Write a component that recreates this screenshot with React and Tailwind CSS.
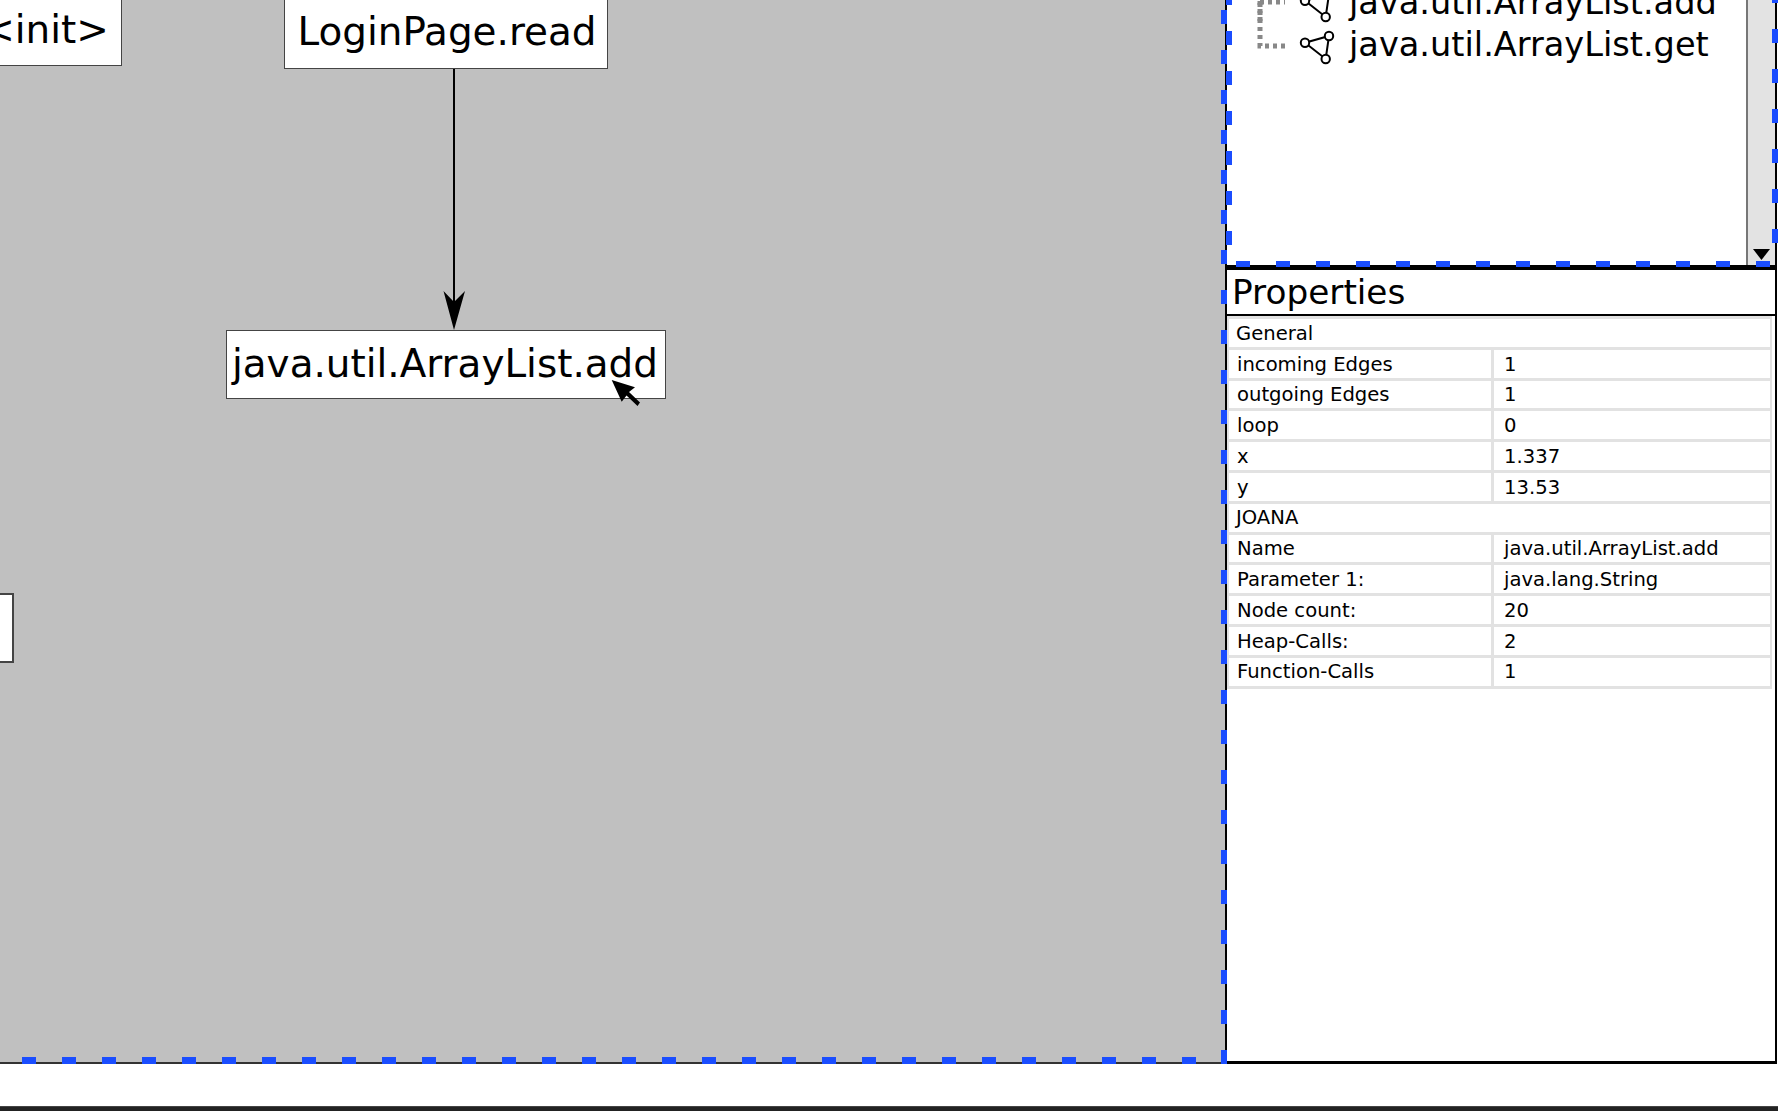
import React from 'react';

const rowsGeneral = [
  ['incoming Edges', '1'],
  ['outgoing Edges', '1'],
  ['loop', '0'],
  ['x', '1.337'],
  ['y', '13.53'],
];

const rowsJoana = [
  ['Name', 'java.util.ArrayList.add'],
  ['Parameter 1:', 'java.lang.String'],
  ['Node count:', '20'],
  ['Heap-Calls:', '2'],
  ['Function-Calls', '1'],
];

function TreeIcon({ last }) {
  return (
    <svg width="80" height="42" viewBox="0 0 80 42" className="shrink-0 overflow-visible">
      <path
        d={last ? 'M5 -20 V23 H30' : 'M5 -20 V42 M5 21 H30'}
        fill="none"
        stroke="#888"
        strokeWidth="5"
        strokeDasharray="4 4"
      />
      <path d="M50 19.7 L74 13 L70.700 36 Z" fill="none" stroke="#000" strokeWidth="2" />
      <circle cx="50" cy="19.700" r="4.200" fill="#fff" stroke="#000" strokeWidth="2" />
      <circle cx="74" cy="13" r="4.200" fill="#fff" stroke="#000" strokeWidth="2" />
      <circle cx="70.700" cy="36" r="4.200" fill="#fff" stroke="#000" strokeWidth="2" />
    </svg>
  );
}

function TreeRow({ label, last }) {
  return (
    <div className="flex h-[42px] items-center gap-[14px] pl-[28px] text-[33.600px] text-black">
      <TreeIcon last={last} />
      <span className="mt-[2px] whitespace-nowrap">{label}</span>
    </div>
  );
}

function GroupRow({ label }) {
  return (
    <div className="flex h-[30.800px] items-center border-b-[3px] border-[#e2e2e2] pl-[7px] pt-[1px] text-[19.600px]">
      {label}
    </div>
  );
}

function PropRow({ name, value }) {
  return (
    <div className="flex h-[30.800px] border-b-[3px] border-[#e2e2e2] text-[19.600px]">
      <div className="flex w-[265px] items-center border-r-[3px] border-[#e2e2e2] pl-[8px] pt-[1px]">{name}</div>
      <div className="flex flex-1 items-center pl-[10px] pt-[1px]">{value}</div>
    </div>
  );
}

function Node({ className, children }) {
  return (
    <div className={`absolute flex items-center justify-center whitespace-nowrap border border-[#444] bg-white text-[38.900px] text-black ${className}`}>
      {children}
    </div>
  );
}

function Canvas() {
  return (
    <div className="relative w-[1225px] shrink-0 overflow-hidden bg-[#c0c0c0]">
      <Node className="left-[-31px] top-[-6px] h-[72px] w-[153px]">&lt;init&gt;</Node>
      <Node className="left-[284px] top-[-4px] h-[73px] w-[324px] pl-[2px]">LoginPage.read</Node>
      <Node className="left-[226px] top-[330px] h-[69px] w-[440px] pr-[2px]">java.util.ArrayList.add</Node>
      <div className="absolute left-[-100px] top-[593px] h-[70px] w-[114px] border-2 border-[#444] bg-white" />

      {/* edge with arrow head */}
      <svg className="absolute left-[440px] top-[69px]" width="30" height="262" viewBox="0 0 30 262">
        <path d="M14 0 V240" stroke="#000" strokeWidth="2" fill="none" />
        <path d="M14 261 L3.500 222 L14 233 L25 222 Z" fill="#000" />
      </svg>

      {/* mouse pointer */}
      <svg className="absolute left-[608px] top-[376px]" width="36" height="34" viewBox="0 0 36 34">
        <path d="M3.700 4 L27 11.300 L21 16 L32 26.500 L29.500 30 L18.500 19.500 L13.700 25.700 Z" fill="#000" />
      </svg>

      <div className="absolute bottom-0 left-0 h-[2px] w-full bg-[#333]" />
    </div>
  );
}

function TreePanel() {
  return (
    <div className="flex h-[265px] shrink-0 overflow-hidden">
      <div className="min-w-0 flex-1 -translate-y-[19px] bg-white">
        <TreeRow label="java.util.ArrayList.add" />
        <TreeRow label="java.util.ArrayList.get" last />
      </div>
      <div className="relative w-[29px] shrink-0 border-l-[2px] border-[#777] bg-[#e3e3e3]">
        <svg className="absolute bottom-[5px] left-[5px]" width="17" height="11" viewBox="0 0 17 11">
          <path d="M0 0 H17 L8.500 11 Z" fill="#000" />
        </svg>
      </div>
    </div>
  );
}

function Properties() {
  return (
    <div className="flex min-h-0 flex-1 flex-col border-t-[5px] border-black">
      <div className="flex h-[46px] shrink-0 items-center border-b-2 border-black pl-[5px] pt-[2px] text-[34.300px] text-black">
        Properties
      </div>
      <div className="mr-[3px] border-x-[2px] border-t-[3px] border-[#e2e2e2] text-black">
        <GroupRow label="General" />
        {rowsGeneral.map((r) => <PropRow key={r[0]} name={r[0]} value={r[1]} />)}
        <GroupRow label="JOANA" />
        {rowsJoana.map((r) => <PropRow key={r[0]} name={r[0]} value={r[1]} />)}
      </div>
    </div>
  );
}

// blue selection dashes drawn over the panels
function Dashes() {
  return (
    <>
      <div className="absolute left-[1221px] top-[-30px] h-[1094px] w-[6px] bg-[repeating-linear-gradient(to_bottom,#1a4dff_0,#1a4dff_14px,transparent_14px,transparent_40px)]" />
      <div className="absolute left-[1226px] top-[-9px] h-[254px] w-[6px] bg-[repeating-linear-gradient(to_bottom,#1a4dff_0,#1a4dff_14px,transparent_14px,transparent_40px)]" />
      <div className="absolute left-[1772px] top-[-11px] h-[274px] w-[6px] bg-[repeating-linear-gradient(to_bottom,#1a4dff_0,#1a4dff_14px,transparent_14px,transparent_40px)]" />
      <div className="absolute left-[1236px] top-[261px] h-[6px] w-[534px] bg-[repeating-linear-gradient(to_right,#1a4dff_0,#1a4dff_14px,transparent_14px,transparent_40px)]" />
      <div className="absolute left-[22px] top-[1057px] h-[7px] w-[1190px] bg-[repeating-linear-gradient(to_right,#1a4dff_0,#1a4dff_14px,transparent_14px,transparent_40px)]" />
    </>
  );
}

export default function App() {
  return (
    <div className="relative flex h-[1111px] w-[1778px] flex-col overflow-hidden bg-white font-['DejaVu_Sans',sans-serif]">
      <div className="flex h-[1064px] shrink-0">
        <Canvas />
        <div className="mr-[1px] flex min-w-0 flex-1 flex-col border-x-2 border-b-[3px] border-black">
          <TreePanel />
          <Properties />
        </div>
      </div>
      <div className="flex-1" />
      <div className="h-[5px] shrink-0 border-t border-[#444] bg-[#222]" />
      <Dashes />
    </div>
  );
}
